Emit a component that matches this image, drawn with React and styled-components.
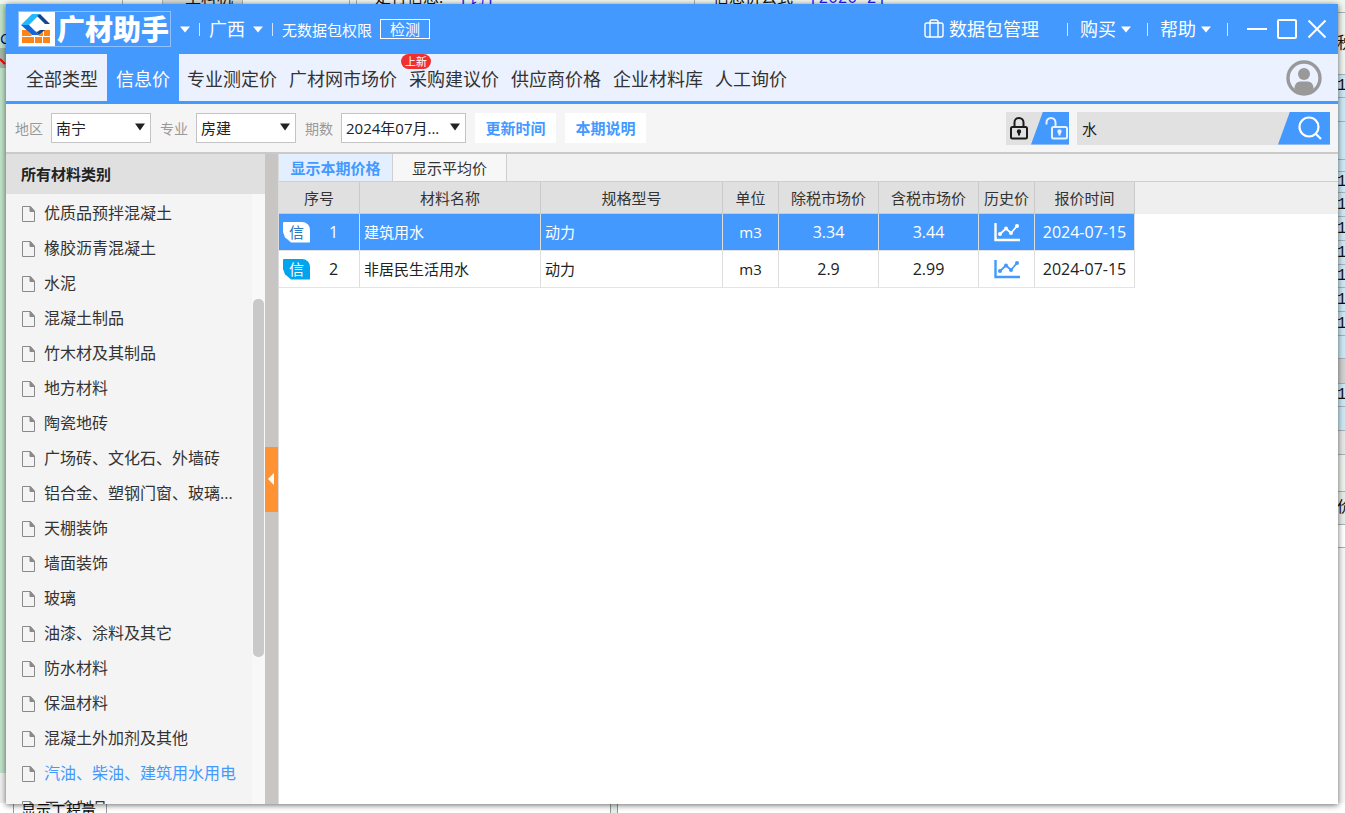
import React, { useState } from 'react';
import styled, { createGlobalStyle } from 'styled-components';

const GlobalStyle = createGlobalStyle`
  * {
    box-sizing: border-box;
  }
  body {
    margin: 0;
    font-family: "Open Sans", "Noto Sans CJK SC", sans-serif;
    font-size: 15px;
    color: #222;
  }
  button, input, select {
    margin: 0;
    padding: 0;
    border: 0;
    border-radius: 0;
    background: none;
    font: inherit;
    color: inherit;
  }
`;

/* ---------- application behind the window ---------- */

const Desktop = styled.div`
  position: relative;
  display: flex;
  flex-direction: column;
  height: 100vh;
  overflow: hidden;
  background: #f4f6f4;
`;

const BackTop = styled.div`
  display: flex;
  align-items: flex-end;
  flex: none;
  height: 4px;
  overflow: hidden;
  padding-left: 122px;
  background: #f1f6ee;
`;

const BackTopCell = styled.div`
  width: ${({ width }) => `${width}px`};
  height: 14px;
  padding-left: ${({ pad }) => `${pad || 0}px`};
  border-left: 1px solid #a8b4a8;
  font-size: 16px;
  line-height: 14px;
  white-space: nowrap;
  background: ${({ shade }) => shade || 'none'};
  color: #111;
`;

const Bracket = styled.span`
  margin-left: 16px;
  font-family: "Liberation Mono", "Noto Sans CJK SC", monospace;
  color: #1a1aff;
`;

const BackMiddle = styled.div`
  display: flex;
  flex: 1;
  justify-content: space-between;
  min-height: 0;
`;

const BackLeft = styled.div`
  width: 8px;
  overflow: hidden;
  padding-top: 24px;
  border-bottom: 30px solid #f0f0f0;
  background: #bfe3c8;
  color: #000080;
  line-height: 20px;
`;

const BackMark = styled.div`
  height: 20px;
  background: #a3b9a8;
`;

const BackRight = styled.div`
  width: 8px;
  overflow: hidden;
  background: #f7f7f7;
`;

const BackRow = styled.div`
  height: ${({ height }) => `${height}px`};
  border-bottom: 1px solid #a9b0b4;
  background: ${({ tone }) => tone};
  font: 16px/22px "Liberation Mono", "Noto Sans CJK SC", monospace;
  display: flex;
  align-items: center;
  color: #111;
`;

const BackBottom = styled.div`
  display: flex;
  flex: none;
  height: 10px;
  overflow: hidden;
  padding-left: 13px;
  background: #fff;
`;

const BackTab = styled.div`
  width: 94px;
  padding-left: 7px;
  border: 1px solid #999;
  border-bottom: 0;
  font-size: 15px;
  line-height: 12px;
  color: #111;
`;

const BackDivider = styled.div`
  width: 8px;
  margin-left: 503px;
  border: 1px solid #8f9a94;
  border-width: 0 1px;
  background: #e6efe8;
`;

/* ---------- window ---------- */

const Window = styled.div`
  position: absolute;
  inset: 4px 7px 9px 6px;
  display: flex;
  flex-direction: column;
  background: #fff;
  box-shadow: 0 1px 6px rgba(0, 0, 0, 0.6);
`;

const TitleBar = styled.header`
  display: flex;
  flex: none;
  align-items: center;
  height: 50px;
  padding: 0 11px 0 12px;
  background: #4499ff;
  color: #fff;
`;

const Logo = styled.h1`
  display: flex;
  align-items: center;
  gap: 2px;
  width: 153px;
  height: 36px;
  margin: 0 9px 0 0;
  border: 1px solid #8fc1ff;
  font-size: 28px;
  font-weight: 900;
  line-height: 34px;
  white-space: nowrap;
`;

const TitleButton = styled.button`
  display: flex;
  align-items: center;
  gap: ${({ gap }) => `${gap || 5}px`};
  font-size: 18px;
  line-height: 24px;
  white-space: nowrap;
  cursor: pointer;
`;

const Separator = styled.span`
  width: 1px;
  height: 13px;
  margin: ${({ wide }) => (wide ? '0 12px 0 16px' : '0 9px')};
  background: #cfe4ff;
`;

const CheckButton = styled.button`
  width: 50px;
  height: 20px;
  margin-left: 8px;
  border: 1px solid #fff;
  line-height: 18px;
  cursor: pointer;
`;

const Spacer = styled.div`
  flex: 1;
`;

const PackButton = styled(TitleButton)`
  margin-right: 12px;
`;

const WindowButtons = styled.div`
  display: flex;
  gap: 10px;
  margin-left: 7px;
`;

const IconButton = styled.button`
  display: flex;
  cursor: pointer;
`;

const NavBar = styled.nav`
  display: flex;
  flex: none;
  align-items: stretch;
  height: 50px;
  padding: 0 16px 0 11px;
  border-bottom: 3px solid #4499ff;
  background: #ebf1ff;
`;

const NavLink = styled.a`
  position: relative;
  display: flex;
  align-items: center;
  padding: ${({ $edge }) => ($edge ? '1px 9px 0' : '1px 6px 0')};
  margin-right: ${({ $active }) => ($active ? '2px' : 0)};
  background: ${({ $active }) => ($active ? '#4499ff' : 'none')};
  color: ${({ $active }) => ($active ? '#fff' : '#333')};
  font-size: 18px;
  text-decoration: none;
  white-space: nowrap;
`;

const NewBadge = styled.span`
  position: absolute;
  top: 0;
  left: -2px;
  width: 30px;
  border-radius: 8px;
  background: #f03030;
  color: #fff;
  font-size: 11px;
  line-height: 15px;
  text-align: center;
`;

const Avatar = styled(IconButton)`
  align-self: center;
  margin-left: auto;
`;

const FilterBar = styled.div`
  display: flex;
  flex: none;
  align-items: center;
  gap: 9px;
  height: 50px;
  padding: 0 8px 0 9px;
  border-bottom: 2px solid #cacaca;
  background: #f5f5f5;
`;

const Field = styled.label`
  display: flex;
  align-items: center;
  gap: 8px;
  color: #999;
  font-size: 14px;
  white-space: nowrap;
`;

const SelectBox = styled.span`
  position: relative;
  display: flex;
  width: ${({ width }) => `${width}px`};
  height: 30px;
`;

const Select = styled.select`
  appearance: none;
  width: 100%;
  padding: 0 20px 0 4px;
  border: 1px solid #c4c4c4;
  background: #fff;
  color: #222;
  font-size: 15px;
`;

const SelectArrow = styled.svg`
  position: absolute;
  top: 10px;
  right: 6px;
  pointer-events: none;
`;

const LinkButton = styled.button`
  width: 81px;
  height: 30px;
  background: #fff;
  color: #4499ff;
  font-weight: 700;
  line-height: 28px;
  cursor: pointer;
`;

const FilterTools = styled.div`
  display: flex;
  gap: 8px;
`;

const LockToggle = styled.div`
  display: flex;
  width: 63px;
  height: 33px;
  background: #e1e1e1;
`;

const LockButton = styled.button`
  display: flex;
  align-items: center;
  justify-content: center;
  width: 25px;
  cursor: pointer;
`;

const UnlockButton = styled.button`
  display: flex;
  flex: 1;
  align-items: center;
  justify-content: flex-end;
  clip-path: polygon(12px 0, 100% 0, 100% 100%, 0 100%);
  background: #4499ff;
  cursor: pointer;
`;

const Search = styled.form`
  display: flex;
  width: 253px;
  height: 33px;
  background: #e1e1e1;
`;

const SearchInput = styled.input`
  flex: 1;
  min-width: 0;
  padding-left: 5px;
  outline: none;
`;

const SearchButton = styled.button`
  display: flex;
  align-items: center;
  justify-content: flex-end;
  width: 52px;
  padding-right: 7px;
  clip-path: polygon(12px 0, 100% 0, 100% 100%, 0 100%);
  background: #4499ff;
  cursor: pointer;
`;

const Body = styled.div`
  display: flex;
  flex: 1;
  min-height: 0;
`;

const Sidebar = styled.aside`
  display: flex;
  flex-direction: column;
  width: 259px;
  background: #f4f4f4;
`;

const SidebarTitle = styled.h2`
  flex: none;
  margin: 0;
  padding-left: 15px;
  background: #e0e0e0;
  font-size: 15px;
  line-height: 40px;
`;

const SidebarBody = styled.div`
  display: flex;
  flex: 1;
  min-height: 0;
`;

const Categories = styled.ul`
  flex: 1;
  min-width: 0;
  margin: 0;
  padding: 0 8px 0 16px;
  overflow: hidden;
  list-style: none;
`;

const Category = styled.a`
  display: flex;
  align-items: center;
  gap: 9px;
  height: 35px;
  color: ${({ $active }) => ($active ? '#4499ff' : '#333')};
  font-size: 16px;
  text-decoration: none;
  white-space: nowrap;

  svg {
    margin-top: 5px;
  }
`;

const ScrollTrack = styled.div`
  width: 13px;
  padding: 105px 1px 0;
  background: #f8f8f8;
`;

const ScrollThumb = styled.div`
  height: 358px;
  border-radius: 5px;
  background: #c9c9c9;
`;

const Splitter = styled.div`
  display: flex;
  align-items: center;
  width: 14px;
  border-right: 1px solid #dcdcdc;
  background: #c8c6c4;
`;

const CollapseButton = styled.button`
  width: 13px;
  height: 65px;
  background: #ff9233;
  cursor: pointer;

  svg {
    display: block;
    margin-left: 3px;
  }
`;

const Content = styled.main`
  flex: 1;
  min-width: 0;
`;

const Tabs = styled.div`
  display: flex;
  height: 28px;
  border-bottom: 1px solid #cfcfcf;
  background: #f1f1f1;
`;

const Tab = styled.button`
  width: 114px;
  border-right: 1px solid #cfcfcf;
  background: ${({ active }) => (active ? '#e3efff' : '#f7f7f7')};
  color: ${({ active }) => (active ? '#4499ff' : '#333')};
  font-weight: ${({ active }) => (active ? 700 : 400)};
  cursor: pointer;
`;

const Table = styled.table`
  width: 100%;
  border-collapse: separate;
  border-spacing: 0;
  table-layout: fixed;
`;

const HeadCell = styled.th`
  width: ${({ width }) => (width ? `${width}px` : 'auto')};
  height: 32px;
  padding: 0;
  border-right: ${({ width }) => (width ? '1px solid #cacaca' : 0)};
  border-bottom: ${({ width }) => (width ? '1px solid #cacaca' : 0)};
  background: ${({ width }) => (width ? '#e0e0e0' : '#efefef')};
  color: #333;
  font-weight: 400;
  white-space: nowrap;
`;

const Cell = styled.td`
  height: 37px;
  padding: 0 0 0 ${({ left }) => (left ? '4px' : 0)};
  border-right: 1px solid #dedede;
  border-bottom: 1px solid #e4e4e4;
  background: ${({ selected }) => (selected ? '#4499ff' : '#fff')};
  color: ${({ selected }) => (selected ? '#fff' : '#222')};
  text-align: ${({ left }) => (left ? 'left' : 'center')};
  font-size: ${({ numeric }) => (numeric ? '16px' : '15px')};
  line-height: 24px;
  white-space: nowrap;

  svg {
    display: block;
    margin: 0 auto;
  }
`;

const IndexInner = styled.div`
  display: flex;
  align-items: center;
  gap: 19px;
`;

const SourceBadge = styled.span`
  width: 27px;
  border-radius: 1px 8px 1px 1px;
  clip-path: polygon(0 0, 100% 0, 100% 100%, 8px 100%, 2px 75%, 0 50%);
  background: ${({ selected }) => (selected ? '#fff' : '#00a5ee')};
  color: ${({ selected }) => (selected ? '#2b77c0' : '#fff')};
  font-size: 15px;
  line-height: 21px;
  text-align: center;
`;

const navItems = [
  '全部类型', '信息价', '专业测定价', '广材网市场价',
  '采购建议价', '供应商价格', '企业材料库', '人工询价',
];

const categories = [
  '优质品预拌混凝土', '橡胶沥青混凝土', '水泥', '混凝土制品', '竹木材及其制品',
  '地方材料', '陶瓷地砖', '广场砖、文化石、外墙砖', '铝合金、塑钢门窗、玻璃...',
  '天棚装饰', '墙面装饰', '玻璃', '油漆、涂料及其它', '防水材料', '保温材料',
  '混凝土外加剂及其他', '汽油、柴油、建筑用水用电', '五金制品',
];

const columns = [
  ['序号', 81], ['材料名称', 181], ['规格型号', 182], ['单位', 56],
  ['除税市场价', 100], ['含税市场价', 100], ['历史价', 56], ['报价时间', 100],
];

const materials = [
  { id: 1, name: '建筑用水', spec: '动力', unit: 'm3', net: '3.34', gross: '3.44', date: '2024-07-15' },
  { id: 2, name: '非居民生活用水', spec: '动力', unit: 'm3', net: '2.9', gross: '2.99', date: '2024-07-15' },
];

const pale = '#eff4ef';
const blue = '#cde8f5';
const backRows = [
  [9, pale], [62, pale, '税'], [23, blue, '1'], [24, blue], [38, blue], [12, blue],
  [21, blue, '1'], [24, blue, '1'], [24, blue, '1'], [24, blue, '1'], [23, blue, '1'],
  [24, blue, '1'], [24, blue, '1'], [23, blue], [25, '#d0d0d0'], [23, blue, '1'],
  [24, blue], [24, '#e6e6e6'], [37, '#eef1ee'], [33, '#e8ece8', '价'], [23, '#fff'],
];

const Caret = () => (
  <svg width="10" height="7" viewBox="0 0 10 7" aria-hidden="true">
    <path d="M0 0.5h10L5 6.5z" fill="currentColor" />
  </svg>
);

const LogoMark = () => (
  <svg width="36" height="34" viewBox="0 0 36 34" aria-hidden="true">
    <path d="M0 0h36v34H0z" fill="#fff" />
    <path d="M3 18h5l5 6H3zM3 25h12v6H3zM16 25h7v6h-7zM24 25h7v6h-7zM19 24l5-4v4zM25 18h6v6h-6z" fill="#ff8416" />
    <path d="M13 2h8L10 13H2z" fill="#27b7ff" />
    <path d="M2 13h8l10 10h-7z" fill="#1466d8" />
    <path d="M18 4l3-2 10 10h-5z" fill="#12488f" />
    <path d="M16 19l4 4 6-5h-5l-3 2z" fill="#12488f" />
  </svg>
);

const FileIcon = () => (
  <svg width="13" height="16" viewBox="0 0 13 16" fill="none" stroke="#8a8a8a" aria-hidden="true">
    <path d="M0.5 0.5h8l4 4.5v10.5h-12z" />
    <path d="M8 0.5v5h4.5z" fill="#8a8a8a" />
  </svg>
);

const TrendIcon = ({ color }) => (
  <svg width="26" height="19" viewBox="0 0 26 19" fill="none" stroke={color} aria-hidden="true">
    <path d="M1.5 0v17H26" strokeWidth="2.4" />
    <path d="M6 11l6-5.5 5 4.5 6-7" strokeWidth="1.8" />
    <g fill={color} stroke="none">
      <circle cx="6" cy="11" r="2" />
      <circle cx="12" cy="5.5" r="2" />
      <circle cx="17" cy="10" r="2" />
      <circle cx="23" cy="3" r="2" />
    </g>
  </svg>
);

const PriceSelect = ({ label, width, options }) => (
  <Field>
    {label}
    <SelectBox width={width}>
      <Select>
        {options.map((option) => <option key={option}>{option}</option>)}
      </Select>
      <SelectArrow width="10" height="8" viewBox="0 0 10 8" aria-hidden="true">
        <path d="M0 0.5h10L5 7.5z" fill="#222" />
      </SelectArrow>
    </SelectBox>
  </Field>
);

const Background = () => (
  <>
    <BackTop>
      <BackTopCell width={40} />
      <BackTopCell width={80} pad={22} shade="#d6dcd6">主料机</BackTopCell>
      <BackTopCell width={107} />
      <BackTopCell width={7} />
      <BackTopCell width={338} pad={18}>定行信息:<Bracket>[钓]</Bracket></BackTopCell>
      <BackTopCell width={400} pad={18}>信息价公式<Bracket>[2020-2]</Bracket></BackTopCell>
    </BackTop>
    <BackMiddle>
      <BackLeft>
        C
        <BackMark>
          <svg width="6" height="20" viewBox="0 0 6 20" aria-hidden="true">
            <path d="M0 11l5 5" stroke="#f00" strokeWidth="2" />
          </svg>
        </BackMark>
      </BackLeft>
      <BackRight>
        {backRows.map(([height, tone, text], index) => (
          <BackRow key={`row-${index}`} height={height} tone={tone}>{text}</BackRow>
        ))}
      </BackRight>
    </BackMiddle>
    <BackBottom>
      <BackTab>显示工程量</BackTab>
      <BackDivider />
    </BackBottom>
  </>
);

const App = () => {
  const [activeNav, setActiveNav] = useState(1);
  const [activeCategory, setActiveCategory] = useState(16);
  const [activeTab, setActiveTab] = useState(0);
  const [selectedId, setSelectedId] = useState(1);
  const [keyword, setKeyword] = useState('水');

  return (
    <Desktop>
      <GlobalStyle />
      <Background />
      <Window>
        <TitleBar>
          <Logo><LogoMark />广材助手</Logo>
          <IconButton aria-label="切换产品"><Caret /></IconButton>
          <Separator />
          <TitleButton gap={8}>广西<Caret /></TitleButton>
          <Separator />
          <span>无数据包权限</span>
          <CheckButton>检测</CheckButton>
          <Spacer />
          <PackButton>
            <svg width="20" height="20" viewBox="0 0 20 20" fill="none" stroke="#fff" strokeWidth="1.4" aria-hidden="true">
              <rect x="1" y="4" width="18" height="14" rx="2" />
              <path d="M6 18V3q0-2 2-2h4q2 0 2 2v15" />
            </svg>
            数据包管理
          </PackButton>
          <Separator wide />
          <TitleButton>购买<Caret /></TitleButton>
          <Separator wide />
          <TitleButton>帮助<Caret /></TitleButton>
          <Separator wide />
          <WindowButtons>
            <IconButton aria-label="最小化">
              <svg width="20" height="20" viewBox="0 0 20 20"><path d="M0 10h20" stroke="#fff" strokeWidth="2" /></svg>
            </IconButton>
            <IconButton aria-label="最大化">
              <svg width="20" height="20" viewBox="0 0 20 20"><rect x="1" y="1" width="18" height="18" rx="1" fill="none" stroke="#fff" strokeWidth="2" /></svg>
            </IconButton>
            <IconButton aria-label="关闭">
              <svg width="20" height="20" viewBox="0 0 20 20"><path d="M1.5 1.5l17 17M18.5 1.5l-17 17" stroke="#fff" strokeWidth="2" /></svg>
            </IconButton>
          </WindowButtons>
        </TitleBar>

        <NavBar>
          {navItems.map((item, index) => (
            <NavLink
              key={item}
              href={`#nav-${index}`}
              $active={activeNav === index}
              $edge={index < 2}
              onClick={() => setActiveNav(index)}
            >
              {item}
              {item === '采购建议价' && <NewBadge>上新</NewBadge>}
            </NavLink>
          ))}
          <Avatar aria-label="用户">
            <svg width="36" height="36" viewBox="0 0 36 36">
              <circle cx="18" cy="18" r="16" fill="#ebf1ff" stroke="#999" strokeWidth="3.4" />
              <circle cx="18" cy="14" r="6" fill="#999" />
              <path d="M8.5 29q0-7.500 6-7.500h7q6 0 6 7.500-4 5-9.500 5t-9.500-5z" fill="#999" />
            </svg>
          </Avatar>
        </NavBar>

        <FilterBar>
          <PriceSelect label="地区" width={100} options={['南宁']} />
          <PriceSelect label="专业" width={100} options={['房建']} />
          <PriceSelect label="期数" width={125} options={['2024年07月...']} />
          <LinkButton>更新时间</LinkButton>
          <LinkButton>本期说明</LinkButton>
          <Spacer />
          <FilterTools>
            <LockToggle>
              <LockButton aria-label="锁定">
                <svg width="18" height="23" viewBox="0 0 18 23" fill="none" stroke="#1b1b1b" strokeWidth="2">
                  <rect x="1" y="10" width="16" height="11.500" rx="1.500" />
                  <path d="M4.500 10V5.500a4.500 4.500 0 0 1 9 0V10" />
                  <path d="M9 15.500v3" />
                  <circle cx="9" cy="14.500" r="1.200" fill="#1b1b1b" />
                </svg>
              </LockButton>
              <UnlockButton aria-label="解锁">
                <svg width="24" height="23" viewBox="0 0 24 23" fill="none" stroke="#e8f2ff" strokeWidth="2">
                  <rect x="7" y="10" width="15" height="11.500" rx="1.500" />
                  <path d="M1.500 7.500V5.500a4.500 4.500 0 0 1 9 0V10" />
                  <path d="M14.500 15.500v3" />
                  <circle cx="14.500" cy="14.500" r="1.200" fill="#e8f2ff" />
                </svg>
              </UnlockButton>
            </LockToggle>
            <Search onSubmit={(e) => e.preventDefault()}>
              <SearchInput
                aria-label="搜索"
                value={keyword}
                onChange={(e) => setKeyword(e.target.value)}
              />
              <SearchButton aria-label="查询">
                <svg width="26" height="26" viewBox="0 0 26 26" fill="none" stroke="#fff" strokeWidth="2.200">
                  <circle cx="12" cy="12" r="9.500" />
                  <path d="M18.500 18.500l5.500 5.500" />
                </svg>
              </SearchButton>
            </Search>
          </FilterTools>
        </FilterBar>

        <Body>
          <Sidebar>
            <SidebarTitle>所有材料类别</SidebarTitle>
            <SidebarBody>
              <Categories>
                {categories.map((item, index) => (
                  <li key={item}>
                    <Category
                      href={`#category-${index}`}
                      $active={activeCategory === index}
                      onClick={() => setActiveCategory(index)}
                    >
                      <FileIcon />
                      {item}
                    </Category>
                  </li>
                ))}
              </Categories>
              <ScrollTrack><ScrollThumb /></ScrollTrack>
            </SidebarBody>
          </Sidebar>
          <Splitter>
            <CollapseButton aria-label="收起">
              <svg width="6" height="12" viewBox="0 0 6 12"><path d="M6 0v12L0 6z" fill="#fff" /></svg>
            </CollapseButton>
          </Splitter>
          <Content>
            <Tabs>
              {['显示本期价格', '显示平均价'].map((item, index) => (
                <Tab key={item} active={activeTab === index ? 1 : 0} onClick={() => setActiveTab(index)}>
                  {item}
                </Tab>
              ))}
            </Tabs>
            <Table>
              <thead>
                <tr>
                  {columns.map(([label, width]) => (
                    <HeadCell key={label} width={width}>{label}</HeadCell>
                  ))}
                  <HeadCell aria-hidden="true" />
                </tr>
              </thead>
              <tbody>
                {materials.map((row) => {
                  const selected = row.id === selectedId ? 1 : 0;
                  return (
                    <tr key={row.id} onClick={() => setSelectedId(row.id)}>
                      <Cell selected={selected} left={1} numeric={1}>
                        <IndexInner>
                          <SourceBadge selected={selected}>信</SourceBadge>
                          {row.id}
                        </IndexInner>
                      </Cell>
                      <Cell selected={selected} left={1}>{row.name}</Cell>
                      <Cell selected={selected} left={1}>{row.spec}</Cell>
                      <Cell selected={selected}>{row.unit}</Cell>
                      <Cell selected={selected} numeric={1}>{row.net}</Cell>
                      <Cell selected={selected} numeric={1}>{row.gross}</Cell>
                      <Cell selected={selected}>
                        <TrendIcon color={selected ? '#fff' : '#4499ff'} />
                      </Cell>
                      <Cell selected={selected} numeric={1}>{row.date}</Cell>
                    </tr>
                  );
                })}
              </tbody>
            </Table>
          </Content>
        </Body>
      </Window>
    </Desktop>
  );
};

export default App;
